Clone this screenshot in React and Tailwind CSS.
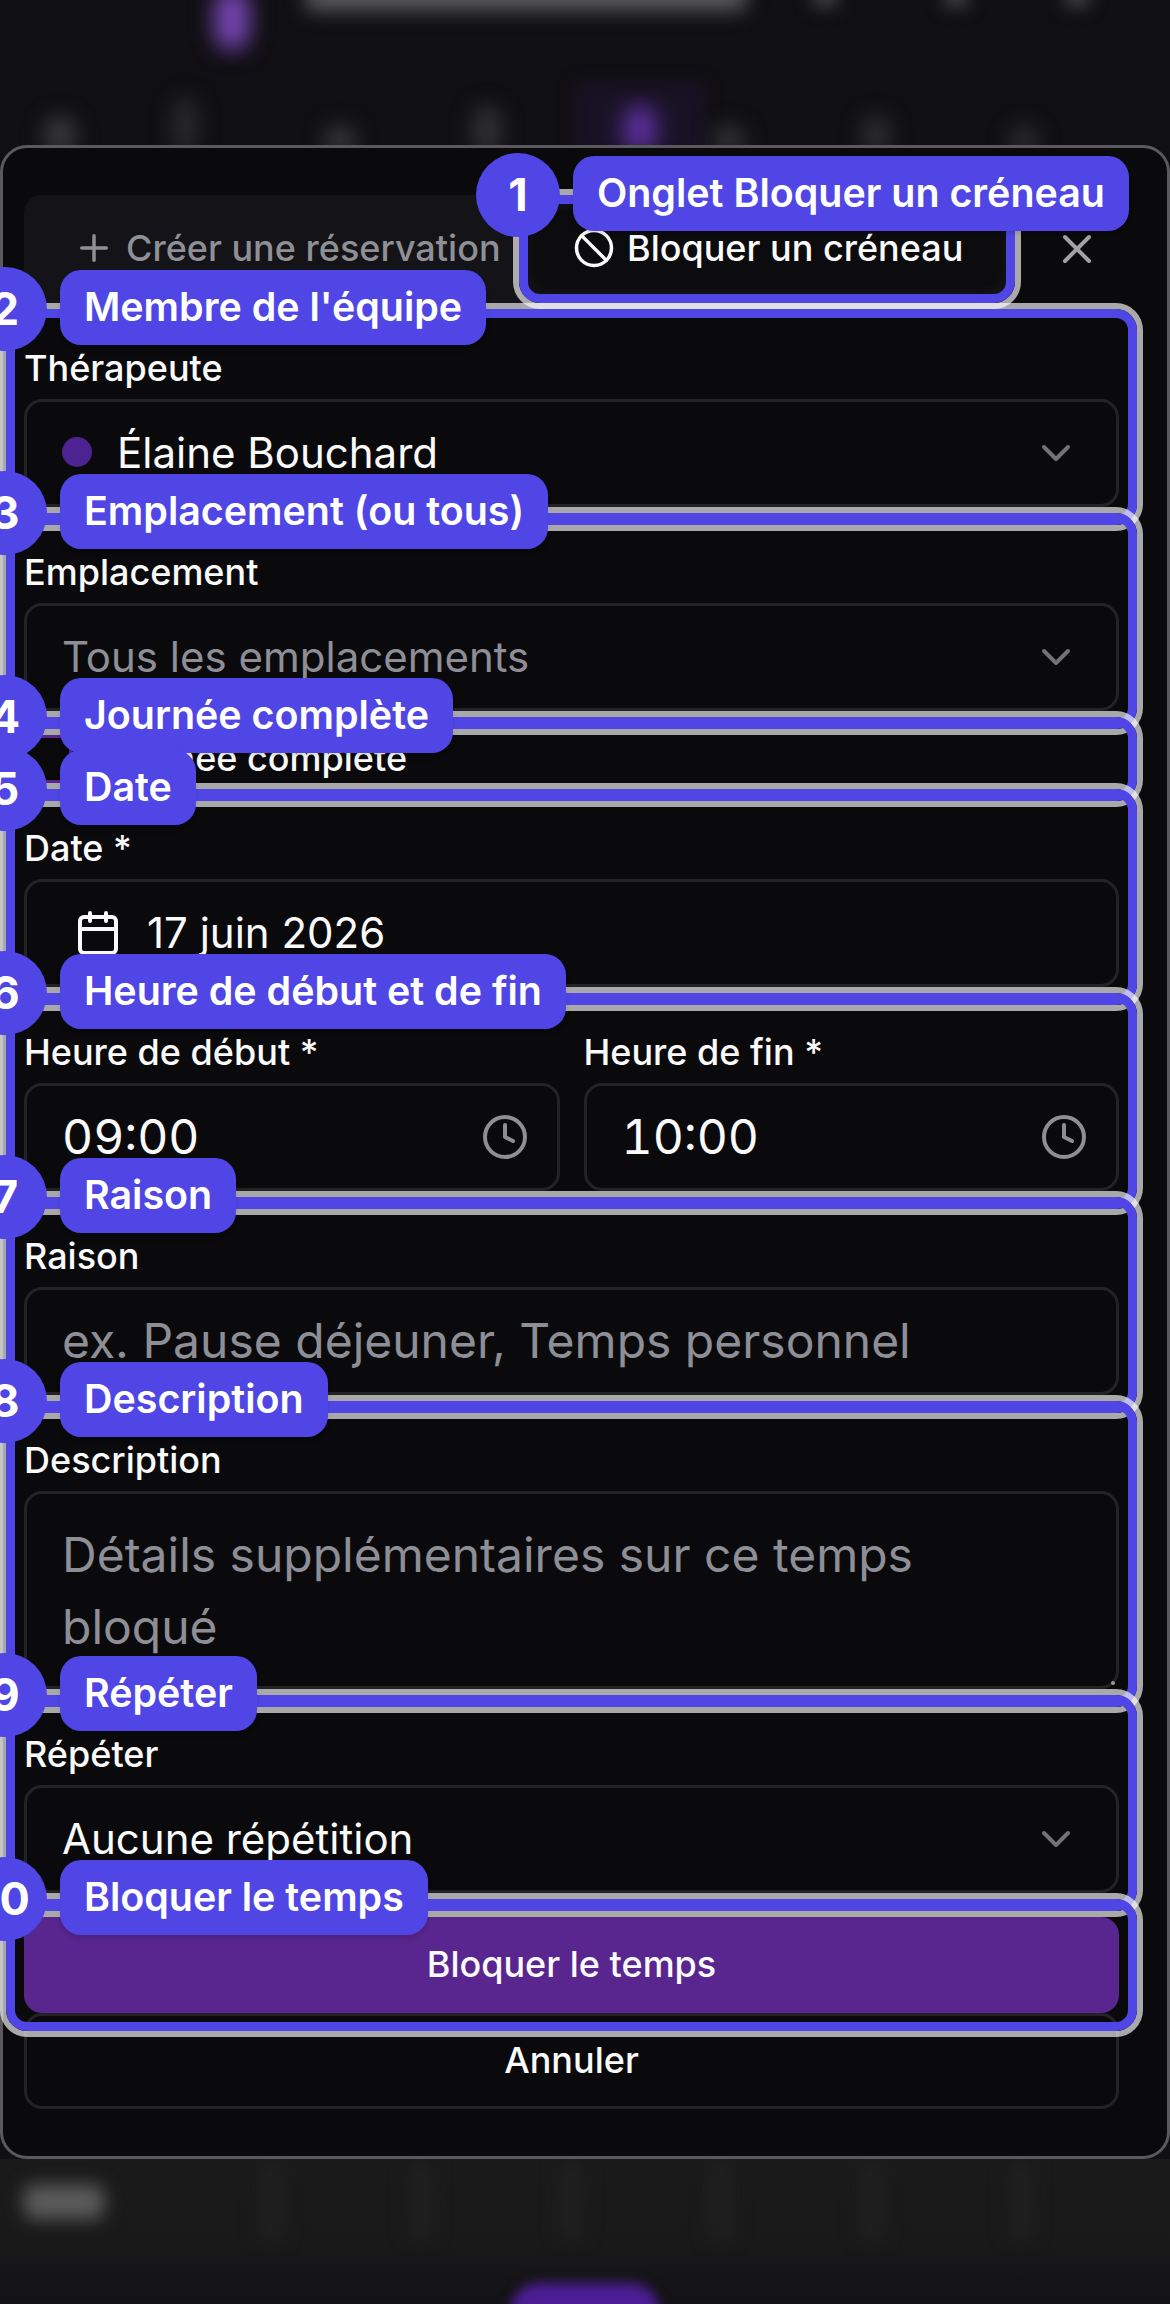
import { Ban, Calendar, ChevronDown, Clock, Plus, X } from "lucide-react";

const Marked = ({ n, title, children, className = "" }) => (
  <div className={`relative ${className}`}>
    {children}
    <div className="absolute -inset-[18px] z-10 rounded-[21px] border-[9px] border-[#4f46e5] ring-[6px] ring-white/65" />
    <div className="absolute -left-[61px] -top-[60px] z-10 flex h-[84px] w-[84px] items-center justify-center rounded-full bg-[#4f46e5] text-[45px] font-bold text-white">
      {n}
    </div>
    <div className="absolute left-[36px] -top-[57px] z-10 flex h-[75px] items-center whitespace-nowrap rounded-[21px] bg-[#4f46e5] pl-[24px] pr-[24px] text-[39.4px] font-semibold text-white shadow-md">
      {title}
    </div>
  </div>
);

const Label = ({ children }) => (
  <div className="h-[72px] pt-[11px] text-[36px] font-medium leading-[60px] text-[#fafafa]">{children}</div>
);

const Box = ({ children, className = "" }) => (
  <div className={`flex h-[108px] items-center rounded-[18px] border-[3px] border-[#232327] ${className}`}>{children}</div>
);

const Select = ({ children }) => (
  <Box className="pl-[35px] pr-[36px] text-[42px]">
    <div className="flex flex-1 items-center pb-[2px]">{children}</div>
    <ChevronDown size={48} className="text-[#71717a]" />
  </Box>
);

const TimeField = ({ label, value }) => (
  <div>
    <Label>{label}</Label>
    <Box className="pl-[35px] pr-[28px] text-[48px] text-[#fafafa] tabular-nums">
      <span className="flex-1">{value}</span>
      <Clock size={48} className="text-[#8f8f8f]" />
    </Box>
  </div>
);

const TopBackdrop = () => (
  <div className="flex h-[145px] flex-col overflow-hidden">
    <div className="flex h-[75px] shrink-0 items-start">
      <span className="-mt-[12px] ml-[214px] h-[62px] w-[36px] rounded-full bg-[#7445b0] blur-[11px]" />
      <span className="-mt-[18px] ml-[56px] h-[28px] w-[440px] bg-[#5e5e60] blur-[10px]" />
      <span className="-mt-[14px] ml-[66px] h-[22px] w-[26px] bg-[#3c3c3e] blur-[8px]" />
      <span className="-mt-[14px] ml-[105px] h-[22px] w-[26px] bg-[#3c3c3e] blur-[8px]" />
      <span className="-mt-[14px] ml-[95px] h-[22px] w-[26px] bg-[#3c3c3e] blur-[8px]" />
    </div>
    <div className="flex h-[70px] shrink-0 items-end">
      <span className="-mb-[10px] ml-[43px] h-[40px] w-[34px] rounded-full bg-[#363638] blur-[10px]" />
      <span className="-mb-[10px] ml-[95px] h-[58px] w-[26px] rounded-full bg-[#28282a] blur-[10px]" />
      <span className="-mb-[10px] ml-[125px] h-[30px] w-[34px] rounded-full bg-[#343436] blur-[10px]" />
      <span className="-mb-[10px] ml-[115px] h-[50px] w-[30px] rounded-full bg-[#2f2f31] blur-[10px]" />
      <span className="-mb-[10px] ml-[73px] flex h-[72px] w-[130px] items-end justify-center bg-[#191225] blur-[8px]">
        <span className="h-[50px] w-[34px] rounded-full bg-[#5b2f9a] blur-[8px]" />
      </span>
      <span className="-mb-[10px] ml-[7px] h-[30px] w-[34px] rounded-full bg-[#303032] blur-[10px]" />
      <span className="-mb-[10px] ml-[115px] h-[40px] w-[30px] rounded-full bg-[#2c2c2e] blur-[10px]" />
      <span className="-mb-[10px] ml-[118px] h-[30px] w-[30px] rounded-full bg-[#2c2c2e] blur-[10px]" />
    </div>
  </div>
);

const BottomBackdrop = () => (
  <div className="flex h-[146px] flex-col overflow-hidden bg-gradient-to-b from-[#1a1a1b] via-[#19191a] via-60% to-[#121115]">
    <div className="flex h-[124px] shrink-0 items-start">
      <span className="ml-[24px] mt-[26px] h-[34px] w-[80px] rounded-[8px] bg-[#5c5c5c] blur-[9px]" />
      <span className="ml-[155px] mt-[4px] h-[76px] w-[24px] bg-[#202021] blur-[9px]" />
      <span className="ml-[126px] mt-[4px] h-[76px] w-[24px] bg-[#202021] blur-[9px]" />
      <span className="ml-[126px] mt-[4px] h-[76px] w-[24px] bg-[#202021] blur-[9px]" />
      <span className="ml-[126px] mt-[4px] h-[76px] w-[24px] bg-[#202021] blur-[9px]" />
      <span className="ml-[126px] mt-[4px] h-[76px] w-[24px] bg-[#202021] blur-[9px]" />
      <span className="ml-[126px] mt-[4px] h-[76px] w-[24px] bg-[#202021] blur-[9px]" />
    </div>
    <div className="flex shrink-0 justify-center">
      <span className="h-[60px] w-[150px] shrink-0 rounded-full bg-[#4c1d95] blur-[6px]" />
    </div>
  </div>
);

export default function App() {
  return (
    <div className="h-[2304px] w-[1170px] overflow-hidden bg-[#100f13] font-['Inter',sans-serif]">
      <TopBackdrop />

      <div className="rounded-[27px] border-[3px] border-[#5a5a5e] bg-[#0a0a0d] pb-[47px] pl-[21px] pr-[48px] pt-[47px] text-[#fafafa]">
        {/* tabs */}
        <div className="flex items-center justify-between">
          <div className="flex h-[108px] w-[988px] items-center gap-[3px] rounded-[18px] bg-[#141317] pl-[16px] text-[36px] font-medium">
            <div className="flex h-[72px] w-[494px] items-center gap-[11px] pb-[2px] pl-[33px] text-[#8f8f96]">
              <Plus size={42} />
              <span>Créer une réservation</span>
            </div>
            <Marked n={1} title="Onglet Bloquer un créneau">
              <div className="flex h-[72px] w-[460px] items-center gap-[12px] rounded-[14px] bg-[#0c0b0e] pb-[2px] pl-[36px] shadow-[0_0_8px_6px_#0c0b0e]">
                <Ban size={42} />
                <span>Bloquer un créneau</span>
              </div>
            </Marked>
          </div>
          <X size={48} className="mr-[18px] text-[#a1a1a6]" />
        </div>

        {/* form */}
        <div className="mt-[24px] flex flex-col gap-[24px]">
          <Marked n={2} title="Membre de l'équipe">
            <Label>Thérapeute</Label>
            <Select>
              <span className="h-[30px] w-[30px] rounded-full bg-[#4c2390]" />
              <span className="ml-[25px]">Élaine Bouchard</span>
            </Select>
          </Marked>

          <Marked n={3} title="Emplacement (ou tous)">
            <Label>Emplacement</Label>
            <Select>
              <span className="text-[#8e8e96]">Tous les emplacements</span>
            </Select>
          </Marked>

          <Marked n={4} title="Journée complète">
            <div className="flex h-[48px] items-center gap-[23px] text-[36px] font-medium">
              <span className="h-[48px] w-[48px] rounded-[12px] border-[3px] border-[#5b2590]" />
              <span className="pb-[2px]">Journée complète</span>
            </div>
          </Marked>

          <Marked n={5} title="Date">
            <Label>Date *</Label>
            <Box className="pl-[47px] text-[42px]">
              <Calendar size={48} />
              <span className="ml-[25px] pb-[2px]">17 juin 2026</span>
            </Box>
          </Marked>

          <Marked n={6} title="Heure de début et de fin">
            <div className="grid grid-cols-2 gap-[24px]">
              <TimeField label="Heure de début *" value="09:00" />
              <TimeField label="Heure de fin *" value="10:00" />
            </div>
          </Marked>

          <Marked n={7} title="Raison">
            <Label>Raison</Label>
            <Box className="pl-[35px] text-[48px] text-[#8e8e96]">ex. Pause déjeuner, Temps personnel</Box>
          </Marked>

          <Marked n={8} title="Description">
            <Label>Description</Label>
            <div className="relative h-[198px] rounded-[18px] border-[3px] border-[#232327] px-[35px] pt-[25px] text-[48px] leading-[72px] text-[#8e8e96]">
              Détails supplémentaires sur ce temps bloqué
              <span className="absolute bottom-[1px] right-[1px] h-[4px] w-[4px] rounded-full bg-[#9a9a9a]" />
            </div>
          </Marked>

          <Marked n={9} title="Répéter">
            <Label>Répéter</Label>
            <Select>
              <span>Aucune répétition</span>
            </Select>
          </Marked>

          <div>
            <Marked n={10} title="Bloquer le temps">
              <button className="flex h-[96px] w-full items-center justify-center rounded-[18px] bg-[#58268e] pb-[2px] text-[36px] font-medium text-[#fafafa]">
                Bloquer le temps
              </button>
            </Marked>
            <button className="flex h-[96px] w-full items-center justify-center rounded-[18px] border-[3px] border-[#232327] pb-[2px] text-[36px] font-medium text-[#fafafa]">
              Annuler
            </button>
          </div>
        </div>
      </div>

      <BottomBackdrop />
    </div>
  );
}
